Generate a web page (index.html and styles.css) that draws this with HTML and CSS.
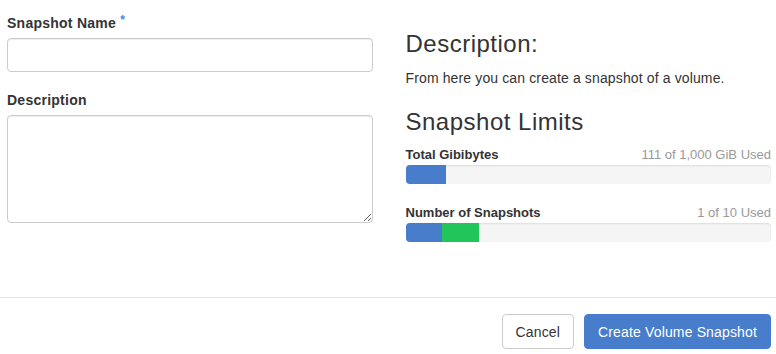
FILE: index.html
```html
<!DOCTYPE html>
<html lang="en">
  <head>
    <meta charset="UTF-8" />
    <title>Create Volume Snapshot</title>
    <link rel="stylesheet" href="styles.css">
  </head>
  <body>
    <div class="modal-body">
      <div class="col col-left">
        <div class="form-group">
          <label class="control-label" for="name">Snapshot Name <span class="required">*</span></label>
          <input type="text" id="name" class="form-control" />
        </div>
        <div class="form-group">
          <label class="control-label" for="description">Description</label>
          <textarea id="description" class="form-control textarea"></textarea>
        </div>
      </div>

      <div class="col col-right">
        <h3>Description:</h3>
        <p>From here you can create a snapshot of a volume.</p>
        <h3>Snapshot Limits</h3>

        <div class="quota">
          <div class="quota-head">
            <strong>Total Gibibytes</strong>
            <span class="quota-used">111 of 1,000 GiB Used</span>
          </div>
          <div class="progress">
            <div class="bar bar-used" style="width: 11.1%"></div>
          </div>
        </div>

        <div class="quota">
          <div class="quota-head">
            <strong>Number of Snapshots</strong>
            <span class="quota-used">1 of 10 Used</span>
          </div>
          <div class="progress">
            <div class="bar bar-used" style="width: 10%"></div>
            <div class="bar bar-new" style="width: 10%"></div>
          </div>
        </div>
      </div>
    </div>

    <div class="modal-footer">
      <button class="btn btn-default">Cancel</button>
      <button class="btn btn-primary">Create Volume Snapshot</button>
    </div>
  </body>
</html>
```

FILE: styles.css
```css
body {
  margin: 0;
  font-family: 'Liberation Sans', Arial, sans-serif;
  font-size: 14px;
  line-height: 20px;
  color: #333;
  background: #fff;
}

.modal-body {
  display: flex;
  gap: 33px;
  padding: 13px 5px 0 7px;
  height: 297px;
  box-sizing: border-box;
}

.col {
  flex: 1;
  min-width: 0;
}

.form-group {
  margin-bottom: 18px;
}

.control-label {
  display: block;
  font-weight: bold;
  letter-spacing: 0.25px;
  margin-bottom: 5px;
}

.required {
  color: #4a8ad6;
  font-size: 12px;
  vertical-align: top;
  position: relative;
  top: -3px;
}

.form-control {
  display: block;
  width: 100%;
  height: 34px;
  box-sizing: border-box;
  border: 1px solid #ccc;
  border-radius: 4px;
  box-shadow: inset 0 1px 1px rgba(0, 0, 0, 0.075);
  padding: 6px 12px;
  font-family: inherit;
  font-size: 14px;
  margin: 0;
}

.textarea {
  height: 108px;
  resize: vertical;
}

h3 {
  font-size: 24px;
  font-weight: normal;
  line-height: 26px;
  letter-spacing: 0.5px;
  margin: 18px 0 11px;
}

p {
  margin: 0 0 10px;
  letter-spacing: 0.13px;
}

p + h3 {
  margin-top: 21px;
  margin-bottom: 10px;
}

.quota {
  font-size: 13px;
  margin-bottom: 19px;
}

.quota-head {
  display: flex;
  justify-content: space-between;
}

.quota-used {
  color: #999;
}

.progress {
  display: flex;
  height: 19px;
  background-color: #f5f5f5;
  border-radius: 4px;
  overflow: hidden;
  box-shadow: inset 0 1px 2px rgba(0, 0, 0, 0.1);
}

.bar {
  height: 100%;
}

.bar-used {
  background-color: #477dca;
}

.bar-new {
  background-color: #22c55a;
}

.modal-footer {
  display: flex;
  justify-content: flex-end;
  gap: 10px;
  border-top: 1px solid #e5e5e5;
  padding: 16px 5px 0;
}

.btn {
  font-family: inherit;
  font-size: 14px;
  line-height: 20px;
  letter-spacing: 0.15px;
  padding: 7px 13px 6px;
  border-radius: 4px;
  border: 1px solid #ccc;
  background: #fff;
  color: #333;
}

.btn-primary {
  background-color: #477dca;
  border-color: #477dca;
  color: #fff;
}
```
